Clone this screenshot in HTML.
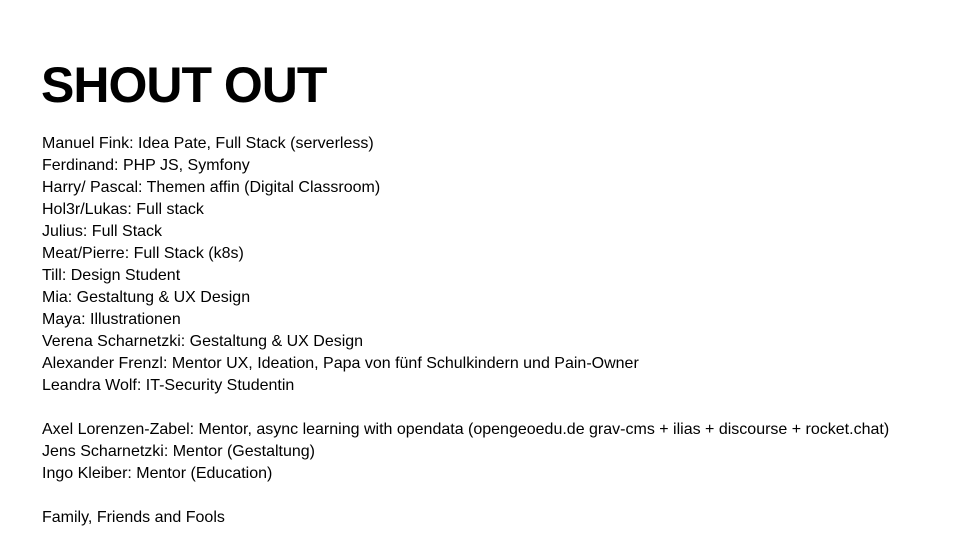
<!DOCTYPE html>
<html><head><meta charset="utf-8"><style>
html,body{margin:0;padding:0;background:#fff;}
body{width:960px;height:540px;position:relative;overflow:hidden;font-family:"Liberation Sans",Arial,sans-serif;color:#000;}
h1{position:absolute;left:41px;top:57px;margin:0;font-size:50px;font-weight:bold;letter-spacing:-1px;line-height:56px;}
.t{position:absolute;left:42px;top:133px;font-size:16px;line-height:22px;letter-spacing:0;white-space:pre;}
</style></head><body>
<h1>SHOUT OUT</h1>
<div class="t">Manuel Fink: Idea Pate, Full Stack (serverless)
Ferdinand: PHP JS, Symfony
Harry/ Pascal: Themen affin (Digital Classroom)
Hol3r/Lukas: Full stack
Julius: Full Stack
Meat/Pierre: Full Stack (k8s)
Till: Design Student
Mia: Gestaltung &amp; UX Design
Maya: Illustrationen
Verena Scharnetzki: Gestaltung &amp; UX Design
Alexander Frenzl: Mentor UX, Ideation, Papa von fünf Schulkindern und Pain-Owner
Leandra Wolf: IT-Security Studentin

Axel Lorenzen-Zabel: Mentor, async learning with opendata (opengeoedu.de grav-cms + ilias + discourse + rocket.chat)
Jens Scharnetzki: Mentor (Gestaltung)
Ingo Kleiber: Mentor (Education)

Family, Friends and Fools</div>
</body></html>
